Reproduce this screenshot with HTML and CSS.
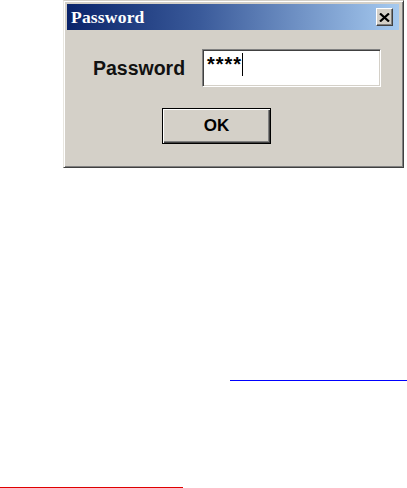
FILE: index.html
```html
<!DOCTYPE html>
<html lang="en">
<head>
  <meta charset="UTF-8" />
  <meta name="viewport" content="width=device-width, initial-scale=1.0"/>
  <title>Password</title>
  <link rel="stylesheet" href="styles.css">
</head>
<body>
  <div class="dialogo">
    <div class="titulo">
      <span class="titulo-texto">Password</span>
      <button class="cerrar" aria-label="Cerrar">
        <svg viewBox="0 0 11 9" width="11" height="9">
          <path d="M1 0.5 L10 8.5 M10 0.5 L1 8.5" stroke="#000" stroke-width="2.2" fill="none"/>
        </svg>
      </button>
    </div>
    <div class="contenido">
      <div class="fila">
        <span class="etiqueta">Password</span>
        <div class="campo"><span class="clave">****</span><span class="cursor"></span></div>
      </div>
      <button class="btn-ok">OK</button>
    </div>
  </div>

  <div class="linea-azul"></div>
  <div class="linea-roja"></div>
</body>
</html>
```

FILE: styles.css
```css
body {
  margin: 0;
  background-color: #ffffff;
  font-family: 'Liberation Sans', Arial, sans-serif;
}

.dialogo {
  margin-left: 63px;
  width: 341px;
  height: 168px;
  box-sizing: border-box;
  background-color: #d4d0c8;
  border-top: 1px solid #d4d0c8;
  border-left: 1px solid #e8e6e0;
  border-right: 1px solid #404040;
  border-bottom: 1px solid #404040;
  box-shadow: inset 1px 1px 0 #ffffff, inset -1px -1px 0 #808080;
  padding: 3px 4px 4px 3px;
}

.titulo {
  height: 26px;
  background: linear-gradient(to right, #0a246a, #3a5a9a 40%, #a6caf0);
  display: flex;
  align-items: center;
  justify-content: space-between;
  padding: 0 6px 0 4px;
}

.titulo-texto {
  color: #ffffff;
  font-family: 'Liberation Serif', 'Times New Roman', serif;
  font-weight: bold;
  font-size: 17.5px;
  letter-spacing: 0.2px;
}

.cerrar {
  width: 17px;
  height: 18px;
  padding: 0;
  background-color: #d4d0c8;
  border: 1px solid;
  border-color: #ffffff #404040 #404040 #ffffff;
  box-shadow: inset -1px -1px 0 #808080;
  display: flex;
  align-items: center;
  justify-content: center;
}

.contenido {
  padding: 19px 0 0 26px;
}

.fila {
  display: flex;
  align-items: center;
}

.etiqueta {
  font-weight: bold;
  font-size: 19.5px;
  color: #111;
  width: 109px;
}

.campo {
  width: 179px;
  height: 38px;
  box-sizing: border-box;
  background-color: #ffffff;
  border: 1px solid;
  border-color: #808080 #ffffff #ffffff #808080;
  box-shadow: inset 1px 1px 0 #404040, inset -1px -1px 0 #d4d0c8;
  padding: 3px 0 0 4px;
  display: flex;
  align-items: flex-start;
}

.clave {
  font-weight: bold;
  font-size: 20px;
  line-height: 23px;
  letter-spacing: 1px;
  color: #000;
}

.cursor {
  width: 1px;
  height: 23px;
  background-color: #000;
}

.btn-ok {
  margin: 21px 0 0 69px;
  width: 109px;
  height: 36px;
  background-color: #d4d0c8;
  border: 1px solid #000;
  box-shadow: inset 1px 1px 0 #ffffff, inset -1px -1px 0 #404040, inset -2px -2px 0 #808080;
  font-family: 'Liberation Sans', Arial, sans-serif;
  font-weight: bold;
  font-size: 17px;
  color: #000;
  padding: 0;
}

.linea-azul {
  margin: 212px 0 0 230px;
  height: 1px;
  background-color: #0000ff;
}

.linea-roja {
  margin-top: 106px;
  width: 183px;
  height: 1px;
  background-color: #e00000;
}
```
